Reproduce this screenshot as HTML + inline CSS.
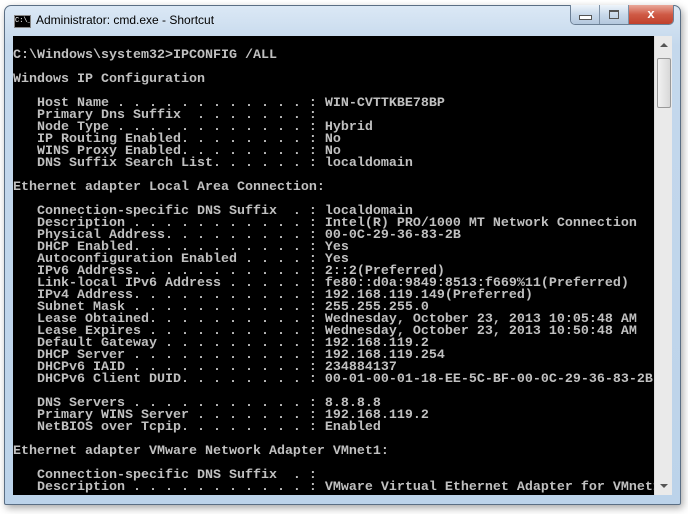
<!DOCTYPE html>
<html><head><style>
body{margin:0;width:688px;height:514px;background:#fff;position:relative;overflow:hidden;font-family:"Liberation Sans",sans-serif}
.win{position:absolute;left:4px;top:5px;width:675px;height:498px;border:1px solid #5a6e84;border-radius:7px 7px 2px 2px;background:linear-gradient(#dbe8f5,#c4d8ec 40px,#bcd3ea);box-shadow:2px 3px 8px rgba(0,0,0,.35)}
.title{position:absolute;left:36px;top:13px;font-size:12px;color:#000}
.icon{position:absolute;left:14px;top:15px;width:15px;height:11px;background:#000;border:1px solid #888;color:#fff;font:7px "Liberation Mono",monospace;line-height:11px;overflow:hidden}
.btns{position:absolute;left:570px;top:5px;height:19px;width:102px;display:flex;border:1px solid #6b7f95;border-top:none;border-radius:0 0 5px 5px;overflow:hidden}
.b{width:28px;background:linear-gradient(#eef4fb,#c9d9ea 50%,#b4c8de);border-right:1px solid #7e91a6;position:relative}
.c{flex:1;background:linear-gradient(#e9a89b,#cf5a45 50%,#c0402c);color:#fff;text-align:center;font:bold 13px "Liberation Sans";line-height:18px}
.con{position:absolute;left:13px;top:36px;width:641px;height:459px;background:#000;overflow:hidden}
pre{margin:0;padding-top:14px;font:bold 13.33px/12px "Liberation Mono",monospace;color:#c0c0c0;white-space:pre;letter-spacing:0}
.sb{position:absolute;left:654px;top:36px;width:17px;height:459px;background:#eaeaea;border-left:1px solid #ddd}
.th{position:absolute;left:2px;top:22px;width:12px;height:48px;border:1px solid #999;border-radius:2px;background:linear-gradient(90deg,#f2f2f2,#d8d8d8)}
</style></head><body>
<div class="win"></div>
<div class="icon">C:\_</div>
<div class="title">Administrator: cmd.exe - Shortcut</div>
<div class="btns"><div class="b"><div style="position:absolute;left:8px;top:10px;width:11px;height:3px;border:1px solid #555;background:#fff"></div></div><div class="b"><div style="position:absolute;left:9px;top:5px;width:8px;height:6px;border:1px solid #555;border-top-width:2px"></div></div><div class="c">x</div></div>
<div class="con"><pre>C:\Windows\system32>IPCONFIG /ALL

Windows IP Configuration

   Host Name . . . . . . . . . . . . : WIN-CVTTKBE78BP
   Primary Dns Suffix  . . . . . . . :
   Node Type . . . . . . . . . . . . : Hybrid
   IP Routing Enabled. . . . . . . . : No
   WINS Proxy Enabled. . . . . . . . : No
   DNS Suffix Search List. . . . . . : localdomain

Ethernet adapter Local Area Connection:

   Connection-specific DNS Suffix  . : localdomain
   Description . . . . . . . . . . . : Intel(R) PRO/1000 MT Network Connection
   Physical Address. . . . . . . . . : 00-0C-29-36-83-2B
   DHCP Enabled. . . . . . . . . . . : Yes
   Autoconfiguration Enabled . . . . : Yes
   IPv6 Address. . . . . . . . . . . : 2::2(Preferred)
   Link-local IPv6 Address . . . . . : fe80::d0a:9849:8513:f669%11(Preferred)
   IPv4 Address. . . . . . . . . . . : 192.168.119.149(Preferred)
   Subnet Mask . . . . . . . . . . . : 255.255.255.0
   Lease Obtained. . . . . . . . . . : Wednesday, October 23, 2013 10:05:48 AM
   Lease Expires . . . . . . . . . . : Wednesday, October 23, 2013 10:50:48 AM
   Default Gateway . . . . . . . . . : 192.168.119.2
   DHCP Server . . . . . . . . . . . : 192.168.119.254
   DHCPv6 IAID . . . . . . . . . . . : 234884137
   DHCPv6 Client DUID. . . . . . . . : 00-01-00-01-18-EE-5C-BF-00-0C-29-36-83-2B

   DNS Servers . . . . . . . . . . . : 8.8.8.8
   Primary WINS Server . . . . . . . : 192.168.119.2
   NetBIOS over Tcpip. . . . . . . . : Enabled

Ethernet adapter VMware Network Adapter VMnet1:

   Connection-specific DNS Suffix  . :
   Description . . . . . . . . . . . : VMware Virtual Ethernet Adapter for VMnet1
</pre></div>
<div class="sb"><div style="position:absolute;left:5px;top:7px;width:0;height:0;border:4px solid transparent;border-bottom:4px solid #555;border-top:none"></div><div class="th"></div><div style="position:absolute;left:5px;bottom:7px;width:0;height:0;border:4px solid transparent;border-top:4px solid #555;border-bottom:none"></div></div>
</body></html>
